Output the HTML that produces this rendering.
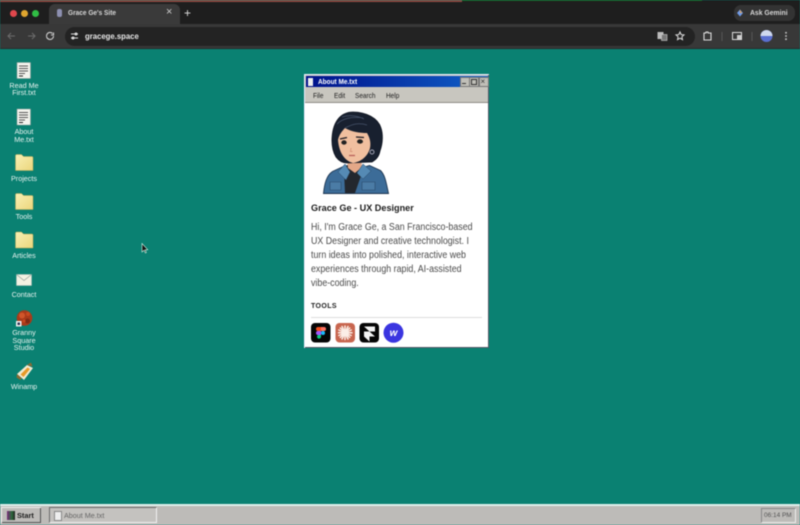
<!DOCTYPE html>
<html><head><meta charset="utf-8"><style>
html,body{margin:0;padding:0;width:800px;height:525px;overflow:hidden;background:#0a8172}
#p{position:absolute;left:0;top:0;width:800px;height:525px;overflow:hidden;filter:blur(.4px);font-family:"Liberation Sans",sans-serif}
#p div{position:absolute}
.t{white-space:nowrap;transform-origin:0 0}
.ic{width:48px;text-align:center;color:#e8f3f0;font-size:7.2px;line-height:7.6px;left:0}
.m{font-size:7.2px;color:#222;top:91px;transform:scaleX(.9)}
svg{position:absolute;left:0;top:0}
</style></head><body><div id="p">
<!-- chrome -->
<div style="left:0;top:0;width:800px;height:24px;background:#1e1e1e"></div>
<div style="left:0;top:0;width:462px;height:2px;background:#8a4a42"></div>
<div style="left:462px;top:0;width:240px;height:1px;background:#1c5a1c"></div>
<div style="left:49px;top:4px;width:131px;height:20px;background:#3a3a3a;border-radius:6px 6px 0 0"></div>
<div style="left:0;top:24px;width:800px;height:25px;background:#383838"></div>
<div style="left:65px;top:27px;width:630px;height:19px;background:#232323;border-radius:10px"></div>
<div style="left:0;top:48px;width:800px;height:1px;background:#2a2a2a"></div>
<div style="left:10px;top:10px;width:7px;height:7px;border-radius:50%;background:#e0474c"></div>
<div style="left:21px;top:10px;width:7px;height:7px;border-radius:50%;background:#dfa52f"></div>
<div style="left:32px;top:10px;width:7px;height:7px;border-radius:50%;background:#30bd45"></div>
<div class="t" style="left:68px;top:8px;font-size:7.6px;font-weight:bold;color:#d6d6d6;transform:scaleX(.86)">Grace Ge's Site</div>
<div style="left:57px;top:9px;width:5px;height:8px;background:#8d90b0;border-radius:2px"></div>
<div class="t" style="left:166px;top:6px;font-size:11px;color:#ccc">×</div>
<div class="t" style="left:184px;top:6px;font-size:12px;color:#ddd">+</div>
<div style="left:734px;top:5px;width:61px;height:16px;background:#333;border-radius:7px"></div>
<div class="t" style="left:750px;top:8px;font-size:7.6px;font-weight:bold;color:#d8d8d8;transform:scaleX(.9)">Ask Gemini</div>
<div class="t" style="left:85px;top:31px;font-size:8.6px;font-weight:bold;color:#e6e6e6;transform:scaleX(.9)">gracege.space</div>
<svg width="800" height="525" viewBox="0 0 800 525" fill="none">
 <path d="M737 13l3-3.500 3 3.500-3 3.500z" fill="#6f9be8"/><path d="M740 9.500l2 3.500h-2z" fill="#e8a04a"/>
 <g stroke="#6b6b6b" stroke-width="1.100"><path d="M15 36H8M11 33l-3 3 3 3"/><path d="M28 36h7M32 33l3 3-3 3"/></g>
 <path d="M53.500 36a3.500 3.500 0 1 1-1-2.500M53.500 32.500v2.500h-2.500" stroke="#ccc" stroke-width="1.100"/>
 <g stroke="#ddd" stroke-width="1"><path d="M71 34h7M71 38h7"/><circle cx="76" cy="34" r="1"/><circle cx="73" cy="38" r="1"/></g>
 <rect x="657.500" y="32" width="6" height="7" fill="#bbb"/><rect x="661.500" y="34.500" width="5.500" height="6" fill="#777" stroke="#ccc" stroke-width=".6"/>
 <path d="M680 32l1.200 2.600 2.800.3-2.100 1.900.6 2.800-2.500-1.400-2.500 1.400.6-2.800-2.100-1.900 2.800-.3z" stroke="#ddd" stroke-width="1"/>
 <path d="M704 33h2v-1h2v1h3v7h-7z" stroke="#ddd" stroke-width="1.100"/>
 <path d="M722 32v9" stroke="#555"/><path d="M752 32v9" stroke="#555"/>
 <rect x="732.500" y="32.500" width="9" height="7" stroke="#ddd" stroke-width="1"/><rect x="737" y="35" width="4" height="4" fill="#ccc"/>
 <circle cx="766.500" cy="36" r="6" fill="#5a6fd0"/><path d="M760.500 36a6 6 0 0 1 12 0z" fill="#cfd8ee"/>
 <g fill="#ccc"><circle cx="786" cy="32.800" r=".9"/><circle cx="786" cy="36" r=".9"/><circle cx="786" cy="39.200" r=".9"/></g>

 <!-- desktop icons -->
 <path d="M17 62.500h13.500v16H17z" fill="#f4f4ee" stroke="#8a9a96" stroke-width=".6"/>
 <path d="M19 66h9M19 68.500h9M19 71h9M19 73.500h6" stroke="#555" stroke-width=".9"/><path d="M19 76h4" stroke="#222"/>
 <path d="M17 109h13.500v16H17z" fill="#f4f4ee" stroke="#8a9a96" stroke-width=".6"/>
 <path d="M19 112.500h9M19 115h9M19 117.500h9M19 120h6" stroke="#555" stroke-width=".9"/><path d="M19 122.500h4" stroke="#222"/>
 <defs><linearGradient id="fg" x1="0" y1="0" x2="1" y2="1"><stop offset="0" stop-color="#f8f0b4"/><stop offset="1" stop-color="#ecd67c"/></linearGradient></defs>
 <g fill="url(#fg)" stroke="#b8a552" stroke-width=".5">
  <path d="M15.500 170.500v-15a1 1 0 0 1 1-1h5l2 2h8.500a1 1 0 0 1 1 1v13z"/>
  <path d="M15.500 209.500v-15a1 1 0 0 1 1-1h5l2 2h8.500a1 1 0 0 1 1 1v13z"/>
  <path d="M15.500 248v-15a1 1 0 0 1 1-1h5l2 2h8.500a1 1 0 0 1 1 1v13z"/>
 </g>
 <rect x="16.500" y="274.500" width="15" height="11" fill="#f3f1e2" stroke="#b9c4bc" stroke-width=".5"/>
 <path d="M16.500 274.500l7.500 6 7.500-6" stroke="#9aa69e" stroke-width=".8"/>
 <circle cx="24.500" cy="318" r="7.800" fill="#a83a1a"/><circle cx="22" cy="315.500" r="3" fill="#d0552a"/><circle cx="27.500" cy="321" r="2.500" fill="#7e2a14"/><circle cx="28" cy="314" r="2" fill="#c84a20"/><circle cx="24" cy="321" r="1.500" fill="#c84a20"/>
 <rect x="16" y="321" width="5.500" height="5.500" fill="#eee"/><rect x="17.500" y="322.500" width="2.500" height="2.500" fill="#335"/>
 <path d="M17 374l10-9 6 3-9 12z" fill="#f2ead2"/><path d="M20.500 374.500l7-7 2.500 1.500-6.500 8z" fill="#e89a28"/><path d="M27 365l4-2.500 1.500 4zM17 374l-.5 3.500 4 2.500 1-2z" fill="#8a6a32"/>
 <path d="M142 243.500v8.500l2-1.800 1.400 2.800 1-.5-1.300-2.700 2.600-.1z" fill="#111" stroke="#dfe" stroke-width=".6"/>
</svg>
<div class="ic t" style="top:81.500px">Read Me<br>First.txt</div>
<div class="ic t" style="top:128px">About<br>Me.txt</div>
<div class="ic t" style="top:174.500px">Projects</div>
<div class="ic t" style="top:213px">Tools</div>
<div class="ic t" style="top:251.500px">Articles</div>
<div class="ic t" style="top:290.500px">Contact</div>
<div class="ic t" style="top:329px">Granny<br>Square<br>Studio</div>
<div class="ic t" style="top:383px">Winamp</div>

<!-- window -->
<div style="left:304px;top:74px;width:185px;height:274px;background:#c8c6bf;box-shadow:inset 1px 1px 0 #eef,inset -1px -1px 0 #556"></div>
<div style="left:306px;top:76px;width:182px;height:11px;background:linear-gradient(90deg,#00108a,#1060c8)"></div>
<div class="t" style="left:317.500px;top:77px;font-size:7.2px;font-weight:bold;color:#fff;transform:scaleX(.9)">About Me.txt</div>
<div style="left:308px;top:77.500px;width:5px;height:8px;background:#eee"></div>
<div style="left:460px;top:77px;width:8px;height:8px;background:#c0bfb8;border:.5px solid #777"></div>
<div style="left:469px;top:77px;width:8px;height:8px;background:#c0bfb8;border:.5px solid #777"></div>
<div style="left:478.500px;top:77px;width:8px;height:8px;background:#c0bfb8;border:.5px solid #777"></div>
<div style="left:462px;top:83px;width:4px;height:1px;background:#333"></div>
<div style="left:471px;top:79px;width:3.500px;height:3.500px;border:.7px solid #333"></div>
<div class="t" style="left:480.500px;top:76.500px;font-size:8px;color:#333">×</div>
<div class="t m" style="left:313px">File</div>
<div class="t m" style="left:334px">Edit</div>
<div class="t m" style="left:354.500px">Search</div>
<div class="t m" style="left:385.500px">Help</div>
<div style="left:305px;top:102px;width:183px;height:1px;background:#8e8c86"></div>
<div style="left:305px;top:103px;width:183px;height:244px;background:#fff"></div>

<!-- avatar -->
<svg width="800" height="525" viewBox="0 0 800 525">
 <path d="M323.500 193.500c1-10 3-18 9-22l13-6 10 4 14-4 11 5c5 5 6 14 8 23z" fill="#3c6c98" stroke="#1d3550" stroke-width=".9"/>
 <path d="M347 165h14l2 5-8 23h-10l-1-22z" fill="#23272e"/>
 <path d="M347 158h14l1 9-7 6-7-5z" fill="#e4a888"/>
 <path d="M345 164l5 8-4 8-8-8zM363 164l-6 9 6 6 8-8z" fill="#558ab4" stroke="#2a4a6a" stroke-width=".5"/>
 <path d="M330 182h11v8h-11zM362 182h13v8h-13z" fill="#4b7ca6" stroke="#2a4a6a" stroke-width=".6"/>
 <path d="M353 112c-12 0-20 9-21 26-.4 8 1 14 4 19 3 4 7 6 11 6l25-1c5-3 7-6 8-11 3-8 3-17 1-23-3-10-15-16-28-16z" fill="#18202f" stroke="#0f1420" stroke-width=".8"/>
 <path d="M338 140c1-5 4-9 7-12 7 4 15 5 22 5 3 5 4 10 3 15-2 8-9 14-17 15-8-2-14-10-15-23z" fill="#f0bf9f"/>
 <path d="M340 139l7-1.500M356 137l8 .5" stroke="#1a1a22" stroke-width="1.200"/>
 <ellipse cx="344" cy="142.500" rx="2.700" ry="2.200" fill="#222"/><ellipse cx="360" cy="141.500" rx="3" ry="2.200" fill="#222"/>
 <path d="M351 148l-.5 3.500h2" stroke="#d08a70" stroke-width=".7" fill="none"/>
 <path d="M349 155.500h6" stroke="#b8605a" stroke-width="1.300"/>
 <circle cx="372" cy="152" r="2" fill="none" stroke="#aab" stroke-width=".9"/>
 <path d="M337 124c5-5 14-8 26-6M342 117c6-2 14-2 22 2M345 128c6-3 12-6 22-3" stroke="#46536a" stroke-width=".7" fill="none"/>
</svg>

<div class="t" style="left:311px;top:203px;font-size:9.300px;font-weight:bold;color:#1c1c1c;transform:scaleX(.98)">Grace Ge - UX Designer</div>
<div class="t" style="left:311px;top:221px;font-size:10px;line-height:14px;color:#4a4a4a;transform:scaleX(.885)">Hi, I'm Grace Ge, a San Francisco-based<br>UX Designer and creative technologist. I<br>turn ideas into polished, interactive web<br>experiences through rapid, AI-assisted<br>vibe-coding.</div>
<div class="t" style="left:311px;top:302.500px;font-size:7px;font-weight:bold;color:#222;letter-spacing:.4px">TOOLS</div>
<div style="left:311px;top:317px;width:171px;height:1px;background:#ddd"></div>

<!-- tools -->
<svg width="800" height="525" viewBox="0 0 800 525">
 <rect x="311" y="323" width="19.500" height="19.500" rx="4" fill="#060606"/>
 <path d="M318 327h3v4h-3a2 2 0 0 1 0-4z" fill="#f24e1e"/><path d="M321 327h3a2 2 0 0 1 0 4h-3z" fill="#ff7262"/>
 <path d="M318 331h3v4h-3a2 2 0 0 1 0-4z" fill="#a259ff"/><circle cx="323" cy="333" r="2" fill="#1abcfe"/>
 <path d="M318 335h3v2a2 2 0 1 1-3-2z" fill="#0acf83"/>
 <rect x="335.500" y="323" width="19.500" height="19.500" rx="4" fill="#c8664f"/>
 <g stroke="#fbeee6" stroke-width="1.500" stroke-linecap="round"><path d="M345 326v13.500M338.500 332.700h13.500M340.300 328l9.400 9.400M349.700 328l-9.400 9.400M342 326.500l6 12.500M348 326.500l-6 12.500M338.800 330l12.400 5.500M338.800 335.500l12.400-5.500"/></g>
 <rect x="359.500" y="323" width="19.500" height="19.500" rx="4" fill="#060606"/>
 <path d="M364 326.500h11v5h-5.500zM364 331.500h5.500l5.500 5h-5.500v5l-5.500-5z" fill="#f4f4f4"/>
 <circle cx="393.500" cy="332.700" r="10" fill="#3a35e0"/>
 <text x="393.500" y="336" text-anchor="middle" font-family="Liberation Sans, sans-serif" font-size="10" font-weight="bold" font-style="italic" fill="#fff">w</text>
</svg>

<!-- taskbar -->
<div style="left:0;top:504px;width:800px;height:21px;background:#bdbbb8"></div>
<div style="left:0;top:504px;width:800px;height:1.500px;background:#dff0ec"></div>
<div style="left:1px;top:507px;width:40px;height:16px;background:#bdbbb8;box-shadow:inset 1px 1px 0 #eee,inset -1px -1px 0 #555"></div>
<div style="left:7px;top:511px;width:8px;height:9px;background:linear-gradient(90deg,#7a2a7a,#2a6a3a 60%,#222)"></div>
<div class="t" style="left:17px;top:511px;font-size:7.4px;font-weight:bold;color:#222">Start</div>
<div style="left:49px;top:507px;width:108px;height:16px;box-sizing:border-box;background:#c4c2bf;border:1.200px solid;border-color:#6a6a6a #f2f2f2 #f2f2f2 #6a6a6a"></div>
<div style="left:54px;top:511px;width:6px;height:8px;background:#eee;border:.5px solid #888"></div>
<div class="t" style="left:64px;top:511px;font-size:7.2px;color:#666">About Me.txt</div>
<div style="left:761px;top:508px;width:35px;height:15px;box-sizing:border-box;border:1px solid;border-color:#888 #eee #eee #888"></div>
<div class="t" style="left:764px;top:512px;font-size:6.800px;color:#555;transform:scaleX(.95)">06:14 PM</div>
</div></body></html>
